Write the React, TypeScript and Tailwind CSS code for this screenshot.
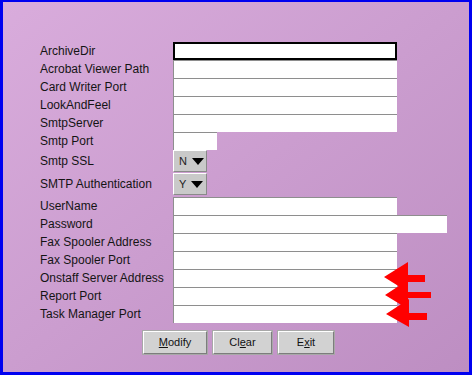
import React from "react";

type Row =
  | { label: string; kind: "text"; width: string; focused?: boolean }
  | { label: string; kind: "combo"; value: string; h: string };

const rows: Row[] = [
  { label: "ArchiveDir", kind: "text", width: "w-[224px]", focused: true },
  { label: "Acrobat Viewer Path", kind: "text", width: "w-[224px]" },
  { label: "Card Writer Port", kind: "text", width: "w-[224px]" },
  { label: "LookAndFeel", kind: "text", width: "w-[224px]" },
  { label: "SmtpServer", kind: "text", width: "w-[224px]" },
  { label: "Smtp Port", kind: "text", width: "w-[44px]" },
  { label: "Smtp SSL", kind: "combo", value: "N", h: "h-[23px]" },
  { label: "SMTP Authentication", kind: "combo", value: "Y", h: "h-[24px]" },
  { label: "UserName", kind: "text", width: "w-[224px]" },
  { label: "Password", kind: "text", width: "w-[274px]" },
  { label: "Fax Spooler Address", kind: "text", width: "w-[224px]" },
  { label: "Fax Spooler Port", kind: "text", width: "w-[224px]" },
  { label: "Onstaff Server Address", kind: "text", width: "w-[224px]" },
  { label: "Report Port", kind: "text", width: "w-[224px]" },
  { label: "Task Manager Port", kind: "text", width: "w-[224px]" },
];

function Combo({ value }: { value: string }) {
  return (
    <div className="flex h-[22px] w-[34px] items-center border border-t-white border-l-white border-r-[#8a8a8a] border-b-[#8a8a8a] bg-[#c9c9c9] pl-[5px] text-[11px] text-[#222]">
      <span>{value}</span>
      <svg width="12" height="7" viewBox="0 0 12 7" className="ml-[5px]">
        <polygon points="0,0 12,0 6,7" fill="#000" />
      </svg>
    </div>
  );
}

function Field({ width, focused }: { width: string; focused?: boolean }) {
  if (focused) {
    return <div className={`h-[18px] ${width} border-2 border-black bg-white`} />;
  }
  return (
    <div className={`h-[18px] ${width} border-t border-l border-[#8e8e8e] bg-white`} />
  );
}

function Button({ pre, mn, post, w }: { pre: string; mn: string; post: string; w: string }) {
  return (
    <button
      className={`h-[23px] ${w} border border-t-white border-l-white border-r-[#7d7d7d] border-b-[#7d7d7d] bg-[#d2d2d2] text-[11px] text-[#111] outline outline-1 outline-[#a8a8a8]`}
    >
      {pre}
      <span className="underline">{mn}</span>
      {post}
    </button>
  );
}

export default function App() {
  return (
    <div
      className="relative h-[375px] w-[472px] border-t-2 border-l-[3px] border-r-[3px] border-b-[3px] border-[#0000f0] bg-gradient-to-br from-[#d9acdc] to-[#bd8ec2]"
      style={{ fontFamily: '"Liberation Sans", Arial, sans-serif' }}
    >
      <div className="pl-[37px] pt-[40px]">
        {rows.map((r) =>
          r.kind === "combo" ? (
            <div key={r.label} className={`flex items-start ${r.h}`}>
              <div className="w-[133px] pt-[2px] text-[12px] text-[#141414]">{r.label}</div>
              <Combo value={r.value} />
            </div>
          ) : (
            <div key={r.label} className="flex h-[18px] items-center">
              <div className="w-[133px] text-[12px] text-[#141414]">{r.label}</div>
              <Field width={r.width} focused={r.focused} />
            </div>
          )
        )}
        <div className="mt-[8px] ml-[103px] flex gap-[6px]">
          <Button pre="" mn="M" post="odify" w="w-[64px]" />
          <Button pre="Cl" mn="e" post="ar" w="w-[59px]" />
          <Button pre="E" mn="x" post="it" w="w-[56px]" />
        </div>
      </div>

      {/* red arrows pointing at the last three fields */}
      <svg
        className="absolute left-[377px] top-[258px]"
        width="56"
        height="68"
        viewBox="0 0 56 68"
      >
        <polygon points="4,17 28,2 28,15 45,15 45,22 28,22 28,32" fill="#ff0000" />
        <polygon points="5,35 28,20 28,32 51,32 51,38 28,38 28,49" fill="#ff0000" />
        <polygon points="6,54 29,39 29,53 47,53 47,60 29,60 29,67" fill="#ff0000" />
      </svg>
    </div>
  );
}
